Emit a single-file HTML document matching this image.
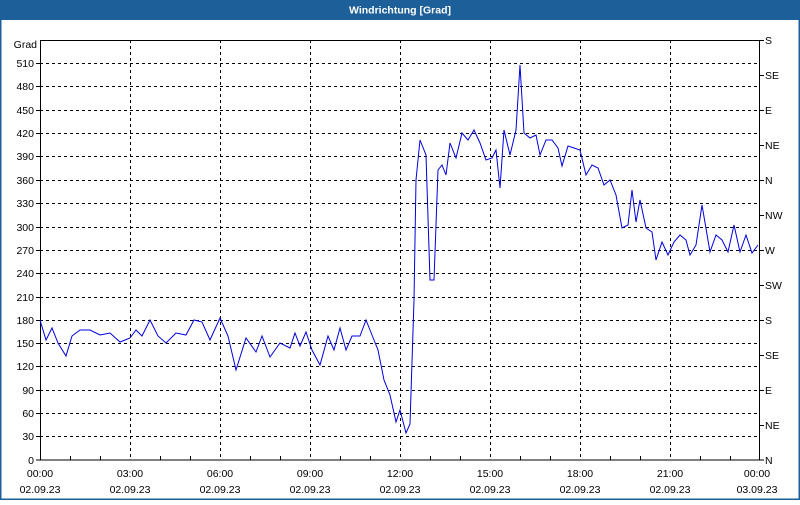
<!DOCTYPE html>
<html><head><meta charset="utf-8"><style>
body{margin:0;width:800px;height:500px;overflow:hidden;background:#fff;font-family:"Liberation Sans",sans-serif}
</style></head><body>
<svg width="800" height="500" xmlns="http://www.w3.org/2000/svg" font-family="Liberation Sans, sans-serif" font-size="10.5">
<rect x="0" y="0" width="800" height="500" fill="#fff"/>
<rect x="0" y="0" width="800" height="20" fill="#1d5f98"/>
<rect x="0" y="20" width="1.5" height="480" fill="#1d5f98"/>
<rect x="798.5" y="20" width="1.5" height="480" fill="#1d5f98"/>
<rect x="0" y="498.5" width="800" height="1.5" fill="#1d5f98"/>
<text x="400" y="13.5" fill="#fff" font-weight="bold" text-anchor="middle" font-size="10.5">Windrichtung [Grad]</text>
<g stroke="#000" stroke-dasharray="3,3" stroke-width="1">
<path d="M40 63.5H760M40 86.5H760M40 110.5H760M40 133.5H760M40 156.5H760M40 180.5H760M40 203.5H760M40 227.5H760M40 250.5H760M40 273.5H760M40 297.5H760M40 320.5H760M40 343.5H760M40 366.5H760M40 390.5H760M40 413.5H760M40 436.5H760"/>
<path d="M130.5 40V460M220.5 40V460M310.5 40V460M400.5 40V460M490.5 40V460M580.5 40V460M670.5 40V460"/>
</g>
<rect x="40.5" y="40.5" width="719" height="419.5" fill="none" stroke="#000"/>
<g stroke="#000"><path d="M70.5 460v-4M100.5 460v-4M160.5 460v-4M190.5 460v-4M250.5 460v-4M280.5 460v-4M340.5 460v-4M370.5 460v-4M430.5 460v-4M460.5 460v-4M520.5 460v-4M550.5 460v-4M610.5 460v-4M640.5 460v-4M700.5 460v-4M730.5 460v-4"/>
<path d="M36 63.5h4M36 86.5h4M36 110.5h4M36 133.5h4M36 156.5h4M36 180.5h4M36 203.5h4M36 227.5h4M36 250.5h4M36 273.5h4M36 297.5h4M36 320.5h4M36 343.5h4M36 366.5h4M36 390.5h4M36 413.5h4M36 436.5h4M36 460h4"/>
<path d="M760 40.5h4M760 75.5h4M760 110.5h4M760 145.5h4M760 180.5h4M760 215.5h4M760 250.5h4M760 285.5h4M760 320.5h4M760 355.5h4M760 390.5h4M760 425.5h4M760 460h4"/></g>
<g text-anchor="end">
<text x="37" y="48">Grad</text>
<text x="34" y="67">510</text><text x="34" y="90">480</text><text x="34" y="114">450</text><text x="34" y="137">420</text><text x="34" y="160">390</text><text x="34" y="184">360</text><text x="34" y="207">330</text><text x="34" y="231">300</text><text x="34" y="254">270</text><text x="34" y="277">240</text><text x="34" y="301">210</text><text x="34" y="324">180</text><text x="34" y="347">150</text><text x="34" y="370">120</text><text x="34" y="394">90</text><text x="34" y="417">60</text><text x="34" y="440">30</text><text x="34" y="464">0</text>
</g>
<g>
<text x="765" y="44">S</text><text x="765" y="79">SE</text><text x="765" y="114">E</text><text x="765" y="149">NE</text><text x="765" y="184">N</text><text x="765" y="219">NW</text><text x="765" y="254">W</text><text x="765" y="289">SW</text><text x="765" y="324">S</text><text x="765" y="359">SE</text><text x="765" y="394">E</text><text x="765" y="429">NE</text><text x="765" y="464">N</text>
</g>
<g text-anchor="middle">
<text x="40" y="477">00:00</text><text x="130" y="477">03:00</text><text x="220" y="477">06:00</text><text x="310" y="477">09:00</text><text x="400" y="477">12:00</text><text x="490" y="477">15:00</text><text x="580" y="477">18:00</text><text x="670" y="477">21:00</text><text x="757" y="477">00:00</text>
<text x="40" y="493">02.09.23</text><text x="130" y="493">02.09.23</text><text x="220" y="493">02.09.23</text><text x="310" y="493">02.09.23</text><text x="400" y="493">02.09.23</text><text x="490" y="493">02.09.23</text><text x="580" y="493">02.09.23</text><text x="670" y="493">02.09.23</text><text x="757" y="493">03.09.23</text>
</g>
<polyline fill="none" stroke="#0000e0" stroke-width="1" points="40,320 46,340 52,328 58,343 66,356 72,336 80,330 90,330 100,335 110,333 120,342 130,338 136,330 142,336 150,320 158,336 166,343 176,333 186,335 194,320 202,322 210,340 220,318 228,336 236,370 246,338 256,352 262,336 270,357 280,343 290,348 295,333 300,346 306,332 312,350 320,365 328,336 334,350 340,328 346,350 352,336 360,336 366,320 372,335 378,350 384,380 390,395 396,422 400,410 406,433 410,424 414,300 416,180 420,140 426,155 430,280 434,280 438,170 442,165 446,175 450,143 456,158 462,133 468,140 474,130 480,143 486,160 492,158 496,150 500,188 504,130 510,155 516,130 520,65 524,133 530,138 536,135 540,155 546,140 552,140 558,148 562,166 568,146 574,148 580,150 586,175 592,165 598,168 604,185 610,180 616,195 622,228 628,225 632,190 636,222 640,200 646,228 652,232 656,260 662,242 668,255 674,242 680,235 686,240 690,255 696,245 702,205 710,252 716,235 722,240 728,252 734,225 740,252 746,235 752,253 758,245"/>
</svg>
</body></html>
